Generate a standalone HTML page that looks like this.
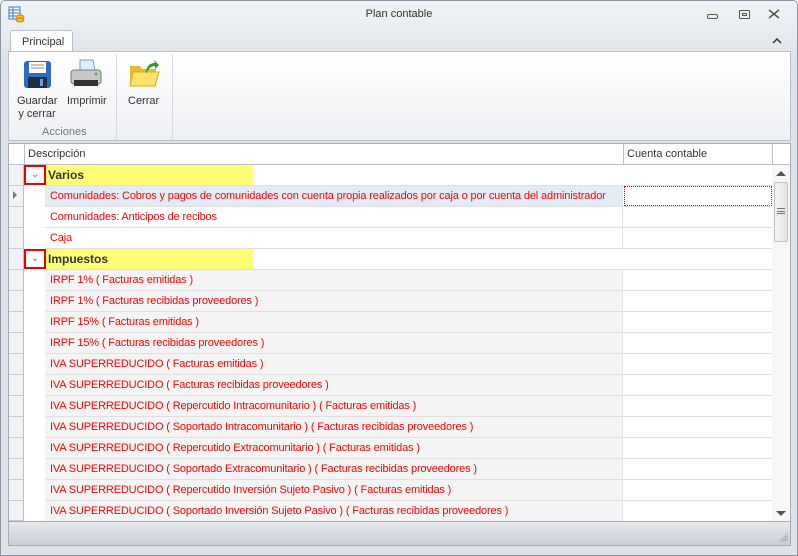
<!DOCTYPE html>
<html><head><meta charset="utf-8"><style>
*{margin:0;padding:0;box-sizing:border-box}
body{width:798px;height:556px;overflow:hidden;font-family:Tahoma,"Liberation Sans","DejaVu Sans",sans-serif;font-size:11px;background:#fff;position:relative}
.a{position:absolute}
.win{left:0;top:0;width:798px;height:556px;background:linear-gradient(#f2f4f7,#dfe3e8 60px,#dfe3e8);border:1px solid #8a96a3;border-radius:5px 5px 0 0}
.row{position:absolute;left:9px;width:763px;height:21px;border-bottom:1px solid #e0e0e0;background:#fff}
.ind{position:absolute;left:0;top:0;width:15px;height:21px;background:#f1f3f6;border-right:1px solid #b9c0c8;border-bottom:1px solid #c9ced4}
.ind2{position:absolute;left:15px;top:0;width:21px;height:21px;background:#fff}
.d{position:absolute;left:36px;top:0;width:578px;height:20px;background:#f4f4f4;color:#f00;padding:4px 0 0 5px;white-space:nowrap;border-right:1px solid #e2e2e2;letter-spacing:-0.15px}
.c{position:absolute;left:615px;top:0;width:148px;height:20px;background:#fff}
.g .d{background:transparent;color:#333;font-weight:bold;font-size:12px;padding:3px 0 0 3px;letter-spacing:0}
.hl{position:absolute;left:36px;top:0;width:208px;height:20px;background:#ffff75}
.exp{position:absolute;left:15px;top:0;width:22px;height:20px;border:2px solid #e00;background:#fff;color:#777;font-size:10px;text-align:center;line-height:15px}
</style></head><body>
<div class="a win"></div>
<svg class="a" style="left:8px;top:6px" width="17" height="17" viewBox="0 0 17 17"><rect x="1" y="1" width="11" height="12" fill="#fff" stroke="#3b78c4"/><path d="M1 4h11M1 7h11M1 10h11M5 1v12" stroke="#3b78c4"/><ellipse cx="12" cy="11" rx="4" ry="2" fill="#f5b731" stroke="#c98a12"/><ellipse cx="12" cy="14" rx="4" ry="2" fill="#f5b731" stroke="#c98a12"/></svg>
<div class="a" style="left:0;top:8px;width:798px;text-align:center;color:#333;font-size:11px">Plan contable</div>
<div class="a" style="left:707px;top:14px;width:11px;height:5px;border:1px solid #555;border-radius:2px"></div>
<div class="a" style="left:739px;top:10px;width:11px;height:9px;border:1px solid #555;border-radius:1px"><div style="margin:2px 2px;height:3px;border:1px solid #555"></div></div>
<svg class="a" style="left:768px;top:9px" width="12" height="10" viewBox="0 0 12 10"><path d="M1 1l10 8M11 1L1 9" stroke="#555" stroke-width="1.6"/></svg>
<div class="a" style="left:10px;top:30px;width:63px;height:23px;background:#fff;border:1px solid #b8c0ca;border-bottom:none;border-radius:3px 3px 0 0;padding:5px 0 0 11px;color:#333">Principal</div>
<svg class="a" style="left:772px;top:37px" width="10" height="7" viewBox="0 0 10 7"><path d="M1 6l4-4 4 4" stroke="#333" stroke-width="1.5" fill="none"/></svg>
<div class="a" style="left:8px;top:51px;width:783px;height:90px;background:linear-gradient(#fff,#eef0f3);border:1px solid #b8c0ca"></div>
<div class="a" style="left:116px;top:54px;width:1px;height:86px;background:#d6dbe1"></div>
<div class="a" style="left:172px;top:54px;width:1px;height:86px;background:#d6dbe1"></div>
<svg class="a" style="left:23px;top:60px" width="30" height="30" viewBox="0 0 30 30"><rect x="1" y="1" width="27" height="27" rx="3" fill="#2d6cc0"/><rect x="6" y="2" width="17" height="11" fill="#fff"/><path d="M8 5h13M8 8h13" stroke="#888"/><rect x="5" y="17" width="19" height="11" fill="#1f3040"/><rect x="17" y="19" width="3" height="7" fill="#6aa0e0"/></svg>
<svg class="a" style="left:69px;top:58px" width="34" height="32" viewBox="0 0 34 32"><path d="M11 2h13l2 10H11z" fill="#dbeefc" stroke="#89a"/><rect x="2" y="12" width="30" height="14" rx="3" fill="#c8c8c8" stroke="#777"/><rect x="5" y="22" width="24" height="6" fill="#333"/><circle cx="27" cy="16" r="1.5" fill="#3c3"/></svg>
<svg class="a" style="left:128px;top:58px" width="32" height="32" viewBox="0 0 32 32"><path d="M2 8h10l2 3h14v17H2z" fill="#e9b92b"/><path d="M5 14h26l-4 14H2z" fill="#fde36a" stroke="#e0a81c"/><path d="M18 16c0-8 4-11 9-11l-1-3 5 5-4 4v-3c-4 0-7 3-9 8z" fill="#2a9a2a"/></svg>
<div class="a" style="left:17px;top:95px;width:40px;text-align:center;color:#333;line-height:13px">Guardar<br>y cerrar</div>
<div class="a" style="left:67px;top:95px;color:#333">Imprimir</div>
<div class="a" style="left:128px;top:95px;color:#333">Cerrar</div>
<div class="a" style="left:42px;top:126px;color:#777">Acciones</div>
<div class="a" style="left:8px;top:143px;width:783px;height:379px;background:#fff;border:1px solid #a5acb5"></div>
<div class="a" style="left:9px;top:144px;width:781px;height:21px;background:#fff;border-bottom:1px solid #b9c0c8"></div>
<div class="a" style="left:24px;top:144px;width:1px;height:21px;background:#b9c0c8"></div>
<div class="a" style="left:623px;top:144px;width:1px;height:21px;background:#b9c0c8"></div>
<div class="a" style="left:772px;top:144px;width:1px;height:21px;background:#b9c0c8"></div>
<div class="a" style="left:28px;top:148px;color:#333">Descripción</div>
<div class="a" style="left:627px;top:148px;color:#333">Cuenta contable</div>
<div class="row g" style="top:165px"><div class="ind"></div><div class="ind2"></div><div class="hl"></div><div class="d" style="border:none">Varios</div><div class="exp">⌄</div></div>
<div class="row" style="top:186px"><div class="ind"><span style="position:absolute;left:4px;top:5px;width:0;height:0;border-left:4px solid #777;border-top:4px solid transparent;border-bottom:4px solid transparent"></span></div><div class="ind2"></div><div class="d" style="background:#e3ecf6">Comunidades: Cobros y pagos de comunidades con cuenta propia realizados por caja o por cuenta del administrador</div><div class="c" style="border:1px dotted #e00"></div></div>
<div class="row" style="top:207px"><div class="ind"></div><div class="ind2"></div><div class="d" style="background:#fff">Comunidades: Anticipos de recibos</div><div class="c"></div></div>
<div class="row" style="top:228px"><div class="ind"></div><div class="ind2"></div><div class="d" style="background:#fff">Caja</div><div class="c"></div></div>
<div class="row g" style="top:249px"><div class="ind"></div><div class="ind2"></div><div class="hl"></div><div class="d" style="border:none">Impuestos</div><div class="exp">⌄</div></div>
<div class="row" style="top:270px"><div class="ind"></div><div class="ind2"></div><div class="d">IRPF 1% ( Facturas emitidas )</div><div class="c"></div></div>
<div class="row" style="top:291px"><div class="ind"></div><div class="ind2"></div><div class="d">IRPF 1% ( Facturas recibidas proveedores )</div><div class="c"></div></div>
<div class="row" style="top:312px"><div class="ind"></div><div class="ind2"></div><div class="d">IRPF 15% ( Facturas emitidas )</div><div class="c"></div></div>
<div class="row" style="top:333px"><div class="ind"></div><div class="ind2"></div><div class="d">IRPF 15% ( Facturas recibidas proveedores )</div><div class="c"></div></div>
<div class="row" style="top:354px"><div class="ind"></div><div class="ind2"></div><div class="d">IVA SUPERREDUCIDO ( Facturas emitidas )</div><div class="c"></div></div>
<div class="row" style="top:375px"><div class="ind"></div><div class="ind2"></div><div class="d">IVA SUPERREDUCIDO ( Facturas recibidas proveedores )</div><div class="c"></div></div>
<div class="row" style="top:396px"><div class="ind"></div><div class="ind2"></div><div class="d">IVA SUPERREDUCIDO ( Repercutido Intracomunitario ) ( Facturas emitidas )</div><div class="c"></div></div>
<div class="row" style="top:417px"><div class="ind"></div><div class="ind2"></div><div class="d">IVA SUPERREDUCIDO ( Soportado Intracomunitario ) ( Facturas recibidas proveedores )</div><div class="c"></div></div>
<div class="row" style="top:438px"><div class="ind"></div><div class="ind2"></div><div class="d">IVA SUPERREDUCIDO ( Repercutido Extracomunitario ) ( Facturas emitidas )</div><div class="c"></div></div>
<div class="row" style="top:459px"><div class="ind"></div><div class="ind2"></div><div class="d">IVA SUPERREDUCIDO ( Soportado Extracomunitario ) ( Facturas recibidas proveedores )</div><div class="c"></div></div>
<div class="row" style="top:480px"><div class="ind"></div><div class="ind2"></div><div class="d">IVA SUPERREDUCIDO ( Repercutido Inversión Sujeto Pasivo ) ( Facturas emitidas )</div><div class="c"></div></div>
<div class="row" style="top:501px;height:20px;border:none"><div class="ind" style="height:20px"></div><div class="ind2" style="height:20px"></div><div class="d" style="height:20px">IVA SUPERREDUCIDO ( Soportado Inversión Sujeto Pasivo ) ( Facturas recibidas proveedores )</div><div class="c" style="height:20px"></div></div>
<div class="a" style="left:772px;top:165px;width:18px;height:356px;background:#f7f7f7"></div>
<div class="a" style="left:776px;top:171px;width:0;height:0;border-left:5px solid transparent;border-right:5px solid transparent;border-bottom:5px solid #555"></div>
<div class="a" style="left:774px;top:182px;width:14px;height:60px;background:linear-gradient(90deg,#f4f4f4,#e4e4e4);border:1px solid #c2c2c2;border-radius:2px"></div>
<div class="a" style="left:777px;top:208px;width:8px;height:6px;border-top:1px solid #777;border-bottom:1px solid #777"><div style="margin-top:2px;border-top:1px solid #777"></div></div>
<div class="a" style="left:776px;top:511px;width:0;height:0;border-left:5px solid transparent;border-right:5px solid transparent;border-top:5px solid #555"></div>
<div class="a" style="left:8px;top:522px;width:783px;height:24px;background:linear-gradient(#e6e9ed,#c9ced5);border:1px solid #a5acb5;border-top:none"></div>
<div class="a" style="left:778px;top:532px;width:10px;height:10px;background:radial-gradient(circle,#aab 1px,transparent 1.5px) 0 0/3px 3px;clip-path:polygon(100% 0,100% 100%,0 100%)"></div>
</body></html>
